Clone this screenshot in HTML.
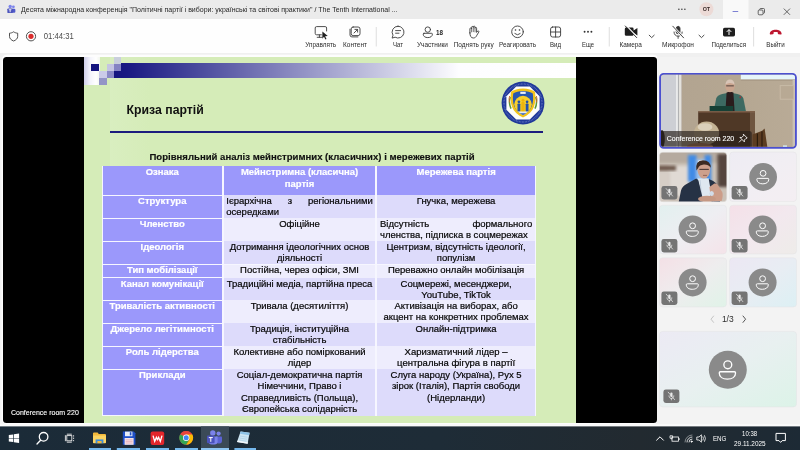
<!DOCTYPE html>
<html lang="uk">
<head>
<meta charset="utf-8">
<title>Teams meeting</title>
<style>
*{box-sizing:border-box;margin:0;padding:0}
html,body{width:800px;height:450px;overflow:hidden;background:#f3f3f3;font-family:"Liberation Sans",sans-serif;}
.abs{position:absolute}
#titlebar{position:absolute;left:0;top:0;width:800px;height:18px;background:#ebebeb;}
#titlebar .t{position:absolute;left:21px;top:4px;font-size:8.6px;color:#262626;white-space:nowrap;letter-spacing:-0.05px}
#toolbar{position:absolute;left:0;top:18px;width:800px;height:36px;background:#fff;}
.tb{position:absolute;top:30px;font-size:7px;color:#333;text-align:center;white-space:nowrap;transform:translateX(-50%);letter-spacing:-0.1px}
#stage{position:absolute;left:3px;top:56.8px;width:653.6px;height:366.3px;background:#000;border-radius:3.5px;overflow:hidden;box-shadow:0 0 0 1.2px #fdfdfd,0 -1.1px 0 1.2px #fdfdfd}

#slide{position:absolute;left:81px;top:0;width:492px;height:367px;background:#d5ecb8;overflow:hidden}
#slide .lt{position:absolute;left:26px;top:0;width:466px;height:367px;background:linear-gradient(90deg,#d9eec0,#d5ecb8 40px)}
.sq{position:absolute;width:7.4px;height:7.2px}
#bar{position:absolute;left:30px;top:6.3px;width:462px;height:14.7px;background:linear-gradient(90deg,#15157f 0,#1a1a83 14px,#fdfdff 345px,#ffffff 462px)}
#stitle{filter:blur(.35px);position:absolute;left:42.6px;top:46.3px;font-size:12.25px;font-weight:bold;color:#111;white-space:nowrap}
#rule{position:absolute;left:26px;top:74.700px;width:433.400px;height:2px;background:#1c1c7e}
#cap{-webkit-text-stroke:.15px #111;filter:blur(.35px);position:absolute;left:65.5px;top:94.6px;font-size:9.57px;font-weight:bold;color:#111;white-space:nowrap}
#tbl{position:absolute;left:17.8px;top:109px;filter:blur(.35px);width:434px;height:250px;background:#f6f6ff;font-size:9.5px;line-height:11.4px;color:#050505}
#tbl .r{position:absolute;left:0;width:434px}
#tbl .c{position:absolute;top:0.35px;bottom:0.35px;padding:0 2.6px 0 2.6px;-webkit-text-stroke:.2px currentColor;text-align:center;overflow:hidden;border-left:.4px solid #f6f6ff;border-right:.4px solid #f6f6ff}
#tbl .d .c{background:#dddbfb;top:.15px;bottom:.15px;border-left-width:.3px;border-right-width:.3px}
#tbl .l .c{background:#eeedfd;top:.15px;bottom:.15px;border-left-width:.3px;border-right-width:.3px}
#tbl .r .c.h{background:#9b98fb;color:#fff;font-weight:bold;top:.55px;bottom:.55px;padding-top:-.2px}
#tbl .r .c.h .x{margin-top:-.2px}
#tbl .c.j{text-align:justify}
#tbl .x{display:block;position:relative;top:-.45px}
#tbl .r.h .x{top:.15px}

.ic{position:absolute}
.lb{position:absolute;top:39.5px;font-size:7.2px;color:#2b2b2b;white-space:nowrap;transform:translateX(-50%) scaleX(.9);letter-spacing:-.05px}
.sep{position:absolute;top:27px;width:1px;height:20px;background:#dcdcdc}
#right{position:absolute;left:657px;top:57px;width:143px;height:370px;background:#f5f5f5}
.tile{position:absolute;border-radius:4px;overflow:hidden;border:.6px solid #e4e4e4}
.av{position:absolute;border-radius:50%;background:#757575}
.mb{position:absolute;width:16px;height:13px;border-radius:2.5px;background:#6f6f6f}
#taskbar{position:absolute;left:0;top:427px;width:800px;height:23px;background:#1e2733;}
table{border-collapse:separate;border-spacing:0}
</style>
</head>
<body>
<!--TOP-->
<svg id="top" width="800" height="57" viewBox="0 0 800 57" style="position:absolute;left:0;top:0;will-change:transform;opacity:.999;font-family:'Liberation Sans',sans-serif">
<rect x="0" y="0" width="800" height="19" fill="#ebebeb"/>
<rect x="0" y="19" width="800" height="34" fill="#ffffff"/>
<rect x="0" y="53" width="800" height="4" fill="#f0f0f0"/>
<rect x="723" y="0" width="25.500" height="19" fill="#f9f9f9"/>
<g transform="translate(1.3 1) scale(.89)"><circle cx="13.6" cy="6.6" r="1.6" fill="#7b83eb"/><rect x="11.8" y="8.6" width="4" height="4.6" rx="1.2" fill="#5059c9"/><circle cx="10" cy="6.2" r="1.9" fill="#7b83eb"/><rect x="6.8" y="8.4" width="6.2" height="5.2" rx="1" fill="#4b53bc"/><rect x="9.4" y="9.6" width="1" height="3" fill="#fff"/><rect x="8.4" y="9.4" width="3" height=".9" fill="#fff"/></g>
<text x="21" y="12.2" font-size="7.8" fill="#1f1f1f" font-weight="normal" text-anchor="start" textLength="376.5" lengthAdjust="spacingAndGlyphs">Десята міжнародна конференція "Політичні партії і вибори: українські та світові практики" / The Tenth International ...</text>
<circle cx="678.9" cy="9.2" r=".75" fill="#333"/>
<circle cx="681.9" cy="9.2" r=".75" fill="#333"/>
<circle cx="684.9" cy="9.2" r=".75" fill="#333"/>
<circle cx="706.400" cy="9.300" r="7" fill="#ecdad6"/>
<text x="706.4" y="11.2" font-size="5.6" fill="#3a2a28" font-weight="bold" text-anchor="middle" textLength="7.4" lengthAdjust="spacingAndGlyphs">ОТ</text>
<rect x="732.600" y="11.100" width="5.600" height=".9" fill="#6f73cf"/>
<g fill="none" stroke="#444" stroke-width=".8"><rect x="758.200" y="10" width="4.800" height="4.800" rx="1"/><path d="M759.700 9.900 v-.4 q0-1 1-1 h2.800 q1 0 1 1 v2.800 q0 1-1 1 h-.4"/></g>
<path d="M783.8 8.6 l6.2 6.2 M790 8.6 l-6.2 6.2" stroke="#444" stroke-width=".8" fill="none"/>
<path d="M13.600 31.800 c1.400 1 2.800 1.300 4.100 1.400 v3.200 c0 2.300-1.800 3.700-4.100 4.600 c-2.300-.9-4.100-2.300-4.100-4.600 v-3.200 c1.300-.1 2.700-.4 4.100-1.400z" fill="none" stroke="#3d3d3d" stroke-width=".9"/>
<circle cx="31" cy="36.3" r="4.6" fill="none" stroke="#3d3d3d" stroke-width=".9"/><circle cx="31" cy="36.3" r="2.6" fill="#d92c2c"/>
<text x="43.8" y="39.2" font-size="8.2" fill="#4a4a4a" font-weight="normal" text-anchor="start" textLength="30" lengthAdjust="spacingAndGlyphs">01:44:31</text>
<rect x="375.8" y="27" width=".8" height="19.5" fill="#d6d6d6"/>
<rect x="608.8000000000001" y="27" width=".8" height="19.5" fill="#d6d6d6"/>
<rect x="753.3000000000001" y="27" width=".8" height="19.5" fill="#d6d6d6"/>
<g fill="none" stroke="#3a3a3a" stroke-width=".9" stroke-linecap="round" stroke-linejoin="round"><path d="M321.400 34.800 h-4.800 q-1.400 0-1.400-1.400 v-5.400 q0-1.400 1.400-1.400 h8.600 q1.400 0 1.400 1.400 v3"/><path d="M319.400 35 v2.200 M317.200 37.300 h4.600"/></g><path d="M322.400 31.600 l5.400 4.300 -2.700 .3 1.400 2.700 -1.100 .55 -1.400 -2.700 -1.700 1.900z" fill="#222"/>
<text x="320.7" y="46.6" font-size="7.2" fill="#2b2b2b" font-weight="normal" text-anchor="middle" textLength="31" lengthAdjust="spacingAndGlyphs">Управлять</text>
<g fill="none" stroke="#3a3a3a" stroke-width=".9" stroke-linecap="round" stroke-linejoin="round"><rect x="351.200" y="27" width="8.800" height="8.600" rx="1.900"/><path d="M350 29.200 v5.800 q0 1.900 1.900 1.900 h6"/><path d="M354 33 l3.400-3.400 M354.900 29.400 h2.700 v2.700"/></g>
<text x="355" y="46.6" font-size="7.2" fill="#2b2b2b" font-weight="normal" text-anchor="middle" textLength="24" lengthAdjust="spacingAndGlyphs">Контент</text>
<g fill="none" stroke="#3a3a3a" stroke-width=".9" stroke-linecap="round" stroke-linejoin="round"><path d="M398 26.2 a5.9 5.9 0 1 1-2.9 11 l-3 .9 .9-2.9 a5.9 5.9 0 0 1 5-9z"/><path d="M395.6 30.6 h5 M395.6 33.2 h3.4"/></g>
<text x="398" y="46.6" font-size="7.2" fill="#2b2b2b" font-weight="normal" text-anchor="middle" textLength="10" lengthAdjust="spacingAndGlyphs">Чат</text>
<g fill="none" stroke="#3a3a3a" stroke-width=".9" stroke-linecap="round" stroke-linejoin="round"><circle cx="427.800" cy="29.600" r="2.700"/><path d="M424 33.300 h7.600 q.8 0 .8 .8 c0 2.300-2 3.500-4.600 3.500 s-4.600-1.200-4.600-3.500 q0-.8 .8-.8z"/></g>
<text x="439.5" y="34.7" font-size="7.6" fill="#222" font-weight="bold" text-anchor="middle" textLength="7" lengthAdjust="spacingAndGlyphs">18</text>
<text x="432.5" y="46.6" font-size="7.2" fill="#2b2b2b" font-weight="normal" text-anchor="middle" textLength="31" lengthAdjust="spacingAndGlyphs">Участники</text>
<g fill="none" stroke="#3a3a3a" stroke-width=".9" stroke-linecap="round" stroke-linejoin="round" transform="translate(469.300 25.700)"><path d="M.6 7.200 V3.100 a.85 .85 0 0 1 1.700 0 V1.600 a.85 .85 0 0 1 1.700 0 V1.300 a.85 .85 0 0 1 1.700 0 V2.500 a.8 .8 0 0 1 1.600 0 V6.700 L8.400 5.300 a.8 .8 0 0 1 1.100 1.100 L7.600 9.500 C6.800 11.400 5.600 12.300 4 12.300 C1.800 12.300 .6 10.400 .6 7.200 z"/><path d="M2.300 3.100 V6.200 M4 1.600 V6 M5.700 2.500 V6.200" stroke-width=".7"/></g>
<text x="473.7" y="46.6" font-size="7.2" fill="#2b2b2b" font-weight="normal" text-anchor="middle" textLength="40" lengthAdjust="spacingAndGlyphs">Поднять руку</text>
<g fill="none" stroke="#3a3a3a" stroke-width=".9" stroke-linecap="round" stroke-linejoin="round"><circle cx="517.5" cy="31.8" r="5.8"/><path d="M514.8 33.6 q2.7 2.6 5.4 0"/></g><circle cx="515.5" cy="30" r=".8" fill="#333"/><circle cx="519.5" cy="30" r=".8" fill="#333"/>
<text x="517.5" y="46.6" font-size="7.2" fill="#2b2b2b" font-weight="normal" text-anchor="middle" textLength="37" lengthAdjust="spacingAndGlyphs">Реагировать</text>
<g fill="none" stroke="#3a3a3a" stroke-width=".9" stroke-linecap="round" stroke-linejoin="round"><rect x="550.6" y="27" width="10" height="10" rx="2"/><path d="M555.6 27 v10 M550.6 32 h10"/></g>
<text x="555.5" y="46.6" font-size="7.2" fill="#2b2b2b" font-weight="normal" text-anchor="middle" textLength="11" lengthAdjust="spacingAndGlyphs">Вид</text>
<circle cx="584.6" cy="31.8" r=".95" fill="#333"/>
<circle cx="588" cy="31.8" r=".95" fill="#333"/>
<circle cx="591.4" cy="31.8" r=".95" fill="#333"/>
<text x="588" y="46.6" font-size="7.2" fill="#2b2b2b" font-weight="normal" text-anchor="middle" textLength="12" lengthAdjust="spacingAndGlyphs">Еще</text>
<path d="M626.200 27.600 h6 q1.400 0 1.400 1.400 v1.400 l3.800-2.400 v7.400 l-3.800-2.400 v1.400 q0 1.400-1.400 1.400 h-6 q-1.400 0-1.400-1.400 v-5.400 q0-1.400 1.400-1.400z" fill="#1e1e1e"/><path d="M626.300 25.600 l10.800 11.400" stroke="#fff" stroke-width="1.300"/><path d="M625.300 26 l11.400 11.600" stroke="#1e1e1e" stroke-width=".9" stroke-linecap="round"/>
<text x="630.7" y="46.6" font-size="7.2" fill="#2b2b2b" font-weight="normal" text-anchor="middle" textLength="22.5" lengthAdjust="spacingAndGlyphs">Камера</text>
<path d="M649.2 35.2 l2.5 2.4 2.5-2.4" fill="none" stroke="#3a3a3a" stroke-width=".9" stroke-linecap="round" stroke-linejoin="round"/>
<g fill="none" stroke="#3a3a3a" stroke-width=".9" stroke-linecap="round" stroke-linejoin="round"><rect x="676.2" y="26.4" width="3.8" height="7.4" rx="1.9" fill="#333"/><path d="M674 32 c0 2.6 1.8 4.2 4.1 4.2 s4.1-1.6 4.1-4.2 M678.1 36.2 v2.2"/></g><path d="M672.8 26.2 l10.8 11.6" stroke="#fff" stroke-width="2.2"/><path d="M672.8 26.2 l10.8 11.6" stroke="#333" stroke-width=".9" stroke-linecap="round"/>
<text x="678" y="46.6" font-size="7.2" fill="#2b2b2b" font-weight="normal" text-anchor="middle" textLength="32" lengthAdjust="spacingAndGlyphs">Микрофон</text>
<path d="M699 35.2 l2.5 2.4 2.5-2.4" fill="none" stroke="#3a3a3a" stroke-width=".9" stroke-linecap="round" stroke-linejoin="round"/>
<rect x="723" y="27.8" width="12" height="8.6" rx="1.6" fill="#1e1e1e"/><path d="M729 34.6 v-4.6 M727 31.6 l2-2 2 2" stroke="#fff" stroke-width="1" fill="none" stroke-linecap="round" stroke-linejoin="round"/>
<text x="728.8" y="46.6" font-size="7.2" fill="#2b2b2b" font-weight="normal" text-anchor="middle" textLength="34.5" lengthAdjust="spacingAndGlyphs">Поделиться</text>
<path d="M769.800 33.600 c.2-2.400 2.800-3.900 5.900-3.900 s5.700 1.500 5.900 3.900 c.1 .8-.4 1.100-1 1 l-2-.4 c-.6-.1-.8-.5-.8-1 v-.9 c-.7-.3-1.400-.4-2.100-.4 s-1.400 .1-2.100 .4 v.9 c0 .5-.2 .9-.8 1 l-2 .4 c-.6 .1-1.100-.2-1-1z" fill="#bd1730"/>
<text x="775.5" y="46.6" font-size="7.2" fill="#2b2b2b" font-weight="normal" text-anchor="middle" textLength="18.4" lengthAdjust="spacingAndGlyphs">Выйти</text>
</svg>
<!--/TOP-->
<div id="stage">
  <div id="slide">
    <div class="lt"></div>
    <div class="abs" style="left:0;top:0;width:16px;height:28px;background:linear-gradient(90deg,#cfcfe9,#f4f4fb 40%,#ffffff 75%,#f2f6ee)"></div>
    <div id="bar"></div>
    <div class="sq" style="left:7.4px;top:7px;background:#14147f"></div>
    <div class="sq" style="left:30px;top:0;background:#c9cfdc"></div>
    <div class="sq" style="left:22.6px;top:7px;background:#c4c4e2"></div>
    <div class="sq" style="left:30px;top:7px;background:#8583c3"></div>
    <div class="sq" style="left:15.2px;top:14.2px;background:#cbcbe8"></div>
    <div class="sq" style="left:22.6px;top:14.2px;background:#8a89c6"></div>
    <div class="sq" style="left:15.2px;top:21.4px;background:#9394c6"></div>
    <div id="stitle">Криза партій</div>
    <div id="rule"></div>
    <div id="cap">Порівняльний аналіз мейнстримних (класичних) і мережевих партій</div>
    <div id="tbl">
      <div class="r h" style="top:0.0px;height:29.5px">
<div class="c h" style="left:0px;width:120.9px"><span class="x">Ознака</span></div>
<div class="c h" style="left:120.9px;width:153.7px"><span class="x">Мейнстримна (класична)<br>партія</span></div>
<div class="c h" style="left:274.6px;width:159.4px"><span class="x">Мережева партія</span></div>
</div>
      <div class="r d" style="top:29.5px;height:23px">
<div class="c h" style="left:0px;width:120.9px"><span class="x">Структура</span></div>
<div class="c j" style="left:120.9px;width:153.7px"><span class="x">Ієрархічна з регіональними осередками</span></div>
<div class="c" style="left:274.6px;width:159.4px"><span class="x">Гнучка, мережева</span></div>
</div>
      <div class="r l" style="top:52.5px;height:23px">
<div class="c h" style="left:0px;width:120.9px"><span class="x">Членство</span></div>
<div class="c" style="left:120.9px;width:153.7px"><span class="x">Офіційне</span></div>
<div class="c j" style="left:274.6px;width:159.4px"><span class="x">Відсутність формального членства, підписка в соцмережах</span></div>
</div>
      <div class="r d" style="top:75.5px;height:23.2px">
<div class="c h" style="left:0px;width:120.9px"><span class="x">Ідеологія</span></div>
<div class="c" style="left:120.9px;width:153.7px"><span class="x">Дотримання ідеологічних основ діяльності</span></div>
<div class="c" style="left:274.6px;width:159.4px"><span class="x">Центризм, відсутність ідеології, популізм</span></div>
</div>
      <div class="r l" style="top:98.7px;height:13.3px">
<div class="c h" style="left:0px;width:120.9px"><span class="x">Тип мобілізації</span></div>
<div class="c" style="left:120.9px;width:153.7px"><span class="x">Постійна, через офіси, ЗМІ</span></div>
<div class="c" style="left:274.6px;width:159.4px"><span class="x">Переважно онлайн мобілізація</span></div>
</div>
      <div class="r d" style="top:112.0px;height:22.5px">
<div class="c h" style="left:0px;width:120.9px"><span class="x">Канал комунікації</span></div>
<div class="c" style="left:120.9px;width:153.7px"><span class="x">Традиційні медіа, партійна преса</span></div>
<div class="c" style="left:274.6px;width:159.4px"><span class="x">Соцмережі, месенджери,<br>YouTube, TikTok</span></div>
</div>
      <div class="r l" style="top:134.5px;height:23px">
<div class="c h" style="left:0px;width:120.9px"><span class="x">Тривалість активності</span></div>
<div class="c" style="left:120.9px;width:153.7px"><span class="x">Тривала (десятиліття)</span></div>
<div class="c" style="left:274.6px;width:159.4px"><span class="x">Активізація на виборах, або акцент на конкретних проблемах</span></div>
</div>
      <div class="r d" style="top:157.5px;height:23px">
<div class="c h" style="left:0px;width:120.9px"><span class="x">Джерело легітимності</span></div>
<div class="c" style="left:120.9px;width:153.7px"><span class="x">Традиція, інституційна стабільність</span></div>
<div class="c" style="left:274.6px;width:159.4px"><span class="x">Онлайн-підтримка</span></div>
</div>
      <div class="r l" style="top:180.5px;height:23px">
<div class="c h" style="left:0px;width:120.9px"><span class="x">Роль лідерства</span></div>
<div class="c" style="left:120.9px;width:153.7px"><span class="x">Колективне або поміркований лідер</span></div>
<div class="c" style="left:274.6px;width:159.4px"><span class="x">Харизматичний лідер –<br>центральна фігура в партії</span></div>
</div>
      <div class="r d" style="top:203.5px;height:46.5px">
<div class="c h" style="left:0px;width:120.9px"><span class="x">Приклади</span></div>
<div class="c" style="left:120.9px;width:153.7px"><span class="x">Соціал-демократична партія Німеччини, Право і Справедливість (Польща), Європейська солідарність</span></div>
<div class="c" style="left:274.6px;width:159.4px"><span class="x">Слуга народу (Україна), Рух 5 зірок (Італія), Партія свободи (Нідерланди)</span></div>
</div>
    </div>
    <svg id="logo" width="46" height="46" viewBox="-23 -23 46 46" style="position:absolute;left:415.700px;top:23.100px;filter:blur(.4px)">
      <defs><clipPath id="shc"><path d="M0-12 c4 0 7.600 1 9.800 2.400 c.6 4.600 .4 9-1.100 13 c-1.400 3.700-4.400 6.400-8.700 8.500 c-4.300-2.100-7.300-4.800-8.700-8.500 c-1.500-4-1.700-8.400-1.100-13 c2.200-1.400 5.800-2.400 9.800-2.400z"/></clipPath></defs>
      <circle r="21.400" fill="#20389a"/>
      <circle r="19" fill="none" stroke="#9fb0e2" stroke-width="1.500" stroke-dasharray=".7 .8" opacity=".5"/>
      <path d="M-6.800-16.600 h13.600 l9.800 9.800 v13.600 l-9.800 9.800 h-13.600 l-9.800-9.800 v-13.600z" fill="#fdfdfb"/>
      <path d="M-12.400-6 q-2.600 5 .4 11.600 M12.400-6 q2.600 5-.4 11.600" stroke="#5c9a3a" stroke-width="1.500" fill="none"/>
      <path d="M-13.400-7 q-1.200 3 0 6.400 M13.400-7 q1.200 3 0 6.400" stroke="#d0642c" stroke-width=".9" fill="none"/>
      <path d="M0-14.400 c5 0 9.400 1.300 12 3.200 c.8 5.400 .6 10.600-1.200 15.400 c-1.600 4.300-5.400 7.800-10.800 10.200 c-5.400-2.400-9.200-5.900-10.800-10.200 c-1.800-4.800-2-10-1.200-15.400 c2.600-1.900 7-3.200 12-3.200z" fill="#f2c31c"/>
      <g clip-path="url(#shc)">
        <rect x="-12" y="-13" width="24" height="27" fill="#2857b0"/>
        <circle cx="0" cy="1.600" r="8.800" fill="#f7cf2c"/>
        <rect x="-2.700" y="-11.300" width="5.400" height="2.200" fill="#eef2fa"/>
        <g fill="#2450a8"><circle cx="-4.100" cy="-1.200" r="1.350"/><rect x="-5.500" y=".4" width="2.800" height="8.400" rx=".9"/><circle cx="4.100" cy="-1.200" r="1.350"/><rect x="2.700" y=".4" width="2.800" height="8.400" rx=".9"/></g>
        <g fill="#eeb40c"><circle cx="0" cy="-2.700" r="1.500"/><rect x="-1.700" y="-1" width="3.400" height="10" rx=".9"/></g>
        <path d="M-8 8.600 h16 v6 h-16z" fill="#e3ebf7"/>
        <rect x="-4" y="10.300" width="8" height="3.200" fill="#2a56ae"/>
      </g>
    </svg>
  </div>
  <svg width="90" height="14" viewBox="0 0 90 14" style="position:absolute;left:4px;top:348px;will-change:transform;opacity:.999;font-family:'Liberation Sans',sans-serif"><text x="4" y="10.3" font-size="7.6" fill="#fff" stroke="#fff" stroke-width=".12" textLength="67.800" lengthAdjust="spacingAndGlyphs">Conference room 220</text></svg>
</div>
<!--RIGHT-->
<svg id="right" width="143" height="370" viewBox="657 57 143 370" style="position:absolute;left:657px;top:57px;will-change:transform;opacity:.999;font-family:'Liberation Sans',sans-serif">
<defs>
<linearGradient id="g2r" x1="0" y1="0" x2="1" y2="1"><stop offset="0" stop-color="#eeecf3"/><stop offset=".5" stop-color="#f1eef3"/><stop offset="1" stop-color="#f5eef2"/></linearGradient>
<linearGradient id="g3l" x1="0" y1="0" x2="1" y2="1"><stop offset="0" stop-color="#e2f0ef"/><stop offset=".5" stop-color="#eeeef2"/><stop offset="1" stop-color="#f5e3e9"/></linearGradient>
<linearGradient id="g3r" x1="0" y1="0" x2="1" y2="1"><stop offset="0" stop-color="#f6e0e8"/><stop offset=".5" stop-color="#f2e8ee"/><stop offset="1" stop-color="#eeece9"/></linearGradient>
<linearGradient id="g4l" x1="0" y1="0" x2="1" y2="1"><stop offset="0" stop-color="#f5e0e6"/><stop offset=".5" stop-color="#eeedee"/><stop offset="1" stop-color="#e0f3e8"/></linearGradient>
<linearGradient id="g4r" x1="0" y1="0" x2="1" y2="1"><stop offset="0" stop-color="#ece7f4"/><stop offset=".5" stop-color="#e8edf4"/><stop offset="1" stop-color="#dcf0f5"/></linearGradient>
<linearGradient id="g5" x1="0" y1="0" x2="1" y2="1"><stop offset="0" stop-color="#eceaf5"/><stop offset=".5" stop-color="#e8f0f0"/><stop offset="1" stop-color="#dcf3e8"/></linearGradient>
<clipPath id="cbig"><rect x="661" y="74.800" width="134" height="72" rx="2.700"/></clipPath>
<clipPath id="cp2"><rect x="659.400" y="152.200" width="67.400" height="49.600" rx="3.400"/></clipPath>
<linearGradient id="wall" x1="0" y1="0" x2="1" y2="0"><stop offset="0" stop-color="#b1a390"/><stop offset=".6" stop-color="#b5a792"/><stop offset="1" stop-color="#b9ab97"/></linearGradient>
<filter id="bl" x="-20%" y="-20%" width="140%" height="140%"><feGaussianBlur stdDeviation=".7"/></filter>
<filter id="bl2" x="-20%" y="-20%" width="140%" height="140%"><feGaussianBlur stdDeviation="1.6"/></filter>
</defs>
<rect x="657" y="57" width="143" height="370" fill="#f4f4f4"/>
<rect x="660.1" y="73.9" width="135.8" height="73.9" rx="3.6" fill="#b4a590" stroke="#4b50cf" stroke-width="1.9"/>
<g clip-path="url(#cbig)"><g filter="url(#bl)">
<rect x="655" y="70" width="145" height="82" fill="url(#wall)"/>
<rect x="655" y="70" width="26.4" height="82" fill="#cdcfd4"/>
<rect x="676.2" y="70" width="1.7" height="82" fill="#f1f1f1"/><rect x="677.9" y="70" width="1" height="82" fill="#a9a9aa"/><rect x="678.9" y="70" width="2.3" height="82" fill="#e3e1dc"/>
<rect x="740.8" y="72" width="56" height="7.6" fill="#e6f6fa"/>
<rect x="740.8" y="79.6" width="56" height="1" fill="#a39480"/>
<rect x="792.6" y="80" width="3" height="70" fill="#c9c1b4"/>
<rect x="780.2" y="85.6" width="13.6" height="13.6" fill="#b8a994" stroke="#c9bca8" stroke-width=".9"/>
<path d="M713.6 111.6 l2.600-13 q1-3.200 6-4.600 l7.600-1.600 7.600 1.600 q5 1.400 6 4.600 l2.600 13z" fill="#3e6b62"/>
<path d="M726.600 92.400 q3.400-1.400 6.800 0 l1.200 19.200 h-9.200z" fill="#2a1c1f"/>
<ellipse cx="730" cy="86.200" rx="4.700" ry="6" fill="#c9a48e"/>
<path d="M725.400 84.400 q.6-5 4.600-5 t4.600 5 q-4.600-3-9.200 0z" fill="#d8c4b6"/>
<rect x="726.200" y="85.300" width="7.600" height="1.100" fill="#5d4a42"/>
<rect x="739.600" y="96.400" width="1.300" height="1.600" fill="#b02a35"/>
<rect x="709.600" y="106" width="23.600" height="5.800" fill="#143f36"/>
<rect x="698.200" y="111.400" width="56.800" height="40" fill="#4f3727"/>
<rect x="750" y="111.400" width="5" height="40" fill="#6e5440"/>
<rect x="698.200" y="111.200" width="56.800" height="1.300" fill="#80634d"/>
<path d="M752.600 134.600 l9.600-3.800 2.400-2.200 2.800 19 h-14.800z" fill="#5b3c22"/>
<path d="M757.400 133.400 v14 M762 131.400 v16" stroke="#2b1a10" stroke-width="1.100"/>
<ellipse cx="706.600" cy="133" rx="12.600" ry="11.400" fill="#c4b394"/>
<ellipse cx="705" cy="127" rx="7.400" ry="3.800" fill="#dbd0bb"/>
<ellipse cx="700" cy="146.400" rx="13" ry="3.400" fill="#b9805f"/>
<ellipse cx="662" cy="139" rx="2.800" ry="9" fill="#2b2622"/>
<rect x="783" y="145.400" width="4" height="2" fill="#d9f1f4"/>
</g>
<path d="M661 131 h88.200 q2.600 0 2.600 2.600 v13.200 h-90.800z" fill="#241d18" fill-opacity=".66"/>
</g>
<text stroke="#fff" stroke-width=".12" x="666.8" y="141.4" font-size="7.7" fill="#ffffff" font-weight="normal" text-anchor="start" textLength="67.4" lengthAdjust="spacingAndGlyphs">Conference room 220</text>
<g fill="none" stroke="#fff" stroke-width=".85" stroke-linejoin="round" stroke-linecap="round"><path d="M743.600 134.400 l3.600 3.600 -1.300 .5 -1.600 1.600 .1 1.800 -4.500-4.500 1.800 .1 1.600-1.600z"/><path d="M741.500 139.800 l-2.200 2.200"/></g>
<g clip-path="url(#cp2)"><g filter="url(#bl)">
<rect x="656" y="150" width="74" height="54" fill="#cbc1b7"/>
<rect x="656" y="150" width="74" height="13" fill="#b5aa9f" filter="url(#bl2)"/>
<rect x="668" y="166" width="22" height="30" fill="#e0dad4" filter="url(#bl2)"/>
<rect x="656" y="171" width="14" height="30" fill="#d6cec6" filter="url(#bl2)"/>
<rect x="658" y="165.600" width="18" height="5" fill="#6b5548" filter="url(#bl2)"/>
<rect x="717.500" y="154" width="12" height="33" fill="#54443d" filter="url(#bl2)"/>
<g filter="url(#bl2)"><rect x="688" y="155" width="8.600" height="27" fill="#3f8be6"/><rect x="696.600" y="159" width="8" height="23" fill="#9fc5ef"/><rect x="704.600" y="155" width="6.600" height="29" fill="#3f8be6"/></g>
<ellipse cx="701.400" cy="161.600" rx="3.600" ry="1.700" fill="#eef0f6"/>
<path d="M678.600 202.600 l2.400-12 q1.200-4.600 5.600-6.600 l9.600-5.600 3 3 5 4 3-7 q7 2 10 6 l3 18.200z" fill="#283144"/>
<path d="M697.600 178.600 l1.400 6 2.600 18 h8.400 l.4-14 -1.800-10.400z" fill="#dfe8f0"/>
<path d="M700 180 l2.200 22" stroke="#b9c7d6" stroke-width=".8"/>
<path d="M696.200 178.800 l2 1.200 5.400 22 h-3.600z" fill="#283144"/>
<path d="M697.200 168 q-.4-6.600 6-6.800 q6.800 0 7 7.400 q0 4.600-1.800 7.400 q-1.800 2.600-4.600 2.600 q-3.400 0-5.400-4.600 q-1.100-2.800-1.200-6z" fill="#cda08c"/>
<path d="M696.400 170.400 q-1.600-9.800 6.600-10.200 q7.600 0 7.800 7.600 q-2.600-3.400-7-3.200 q-4.400 .4-5.800 3.600z" fill="#3a2a24"/>
<path d="M699.400 169.400 h9.400" stroke="#4a3835" stroke-width="1.100"/>
<path d="M703 175.400 h4" stroke="#8d5c50" stroke-width=".9"/>
<path d="M709.400 187 l5-3.400 q2-.6 3.200 1 l4.600 7.400 q1.200 3.400-.6 9 l-8.600 .4 -2.600-6z" fill="#cc9d89"/>
<ellipse cx="707" cy="199" rx="9" ry="3.200" fill="#c59883"/>
<ellipse cx="711.600" cy="193.600" rx="2.300" ry="2.500" fill="#d2dce8"/>
</g></g>
<rect x="659.400" y="152.200" width="67.400" height="49.600" rx="3.400" fill="none" stroke="#e6e6e6" stroke-width=".5"/>
<rect x="661.4" y="186" width="16" height="13.4" rx="2.4" fill="#747474"/><g stroke="#e9e9e9" stroke-width=".75" fill="none" stroke-linecap="round"><rect x="668.3" y="188.8" width="2.2" height="4.6" rx="1.1" fill="#e9e9e9" stroke="none"/><path d="M667.0 192.20000000000002 c0 1.700 1 2.600 2.400 2.600 s2.400-.9 2.400-2.600 M669.4 194.8 v1.500"/><path d="M666.1999999999999 188.6 l6.400 7.400"/></g>
<rect x="729.6" y="152" width="67" height="49.6" rx="3.4" fill="url(#g2r)" stroke="#e4e4e6" stroke-width=".6"/>
<circle cx="763.1" cy="177" r="13.9" fill="#8a8a8a"/><g fill="none" stroke="#fff" stroke-width="0.99" stroke-linejoin="round"><circle cx="763.1" cy="173.33" r="2.88"/><path d="M758.24 178.39 h9.73 q0.79 0 0.79 0.89 c0 2.98 -2.58 4.57 -5.96 4.57 s-5.96 -1.59 -5.96 -4.57 q0 -0.89 0.79 -0.89z"/></g>
<rect x="731.6" y="186" width="16" height="13.4" rx="2.4" fill="#747474"/><g stroke="#e9e9e9" stroke-width=".75" fill="none" stroke-linecap="round"><rect x="738.5" y="188.8" width="2.2" height="4.6" rx="1.1" fill="#e9e9e9" stroke="none"/><path d="M737.2 192.20000000000002 c0 1.700 1 2.600 2.400 2.600 s2.400-.9 2.400-2.600 M739.6 194.8 v1.500"/><path d="M736.4 188.6 l6.400 7.400"/></g>
<rect x="659.4" y="205.2" width="67.2" height="48.8" rx="3.4" fill="url(#g3l)" stroke="#e4e4e6" stroke-width=".6"/>
<circle cx="692.6" cy="229.5" r="14" fill="#8a8a8a"/><g fill="none" stroke="#fff" stroke-width="1.00" stroke-linejoin="round"><circle cx="692.6" cy="225.80" r="2.90"/><path d="M687.70 230.90 h9.80 q0.80 0 0.80 0.90 c0 3.00 -2.60 4.60 -6.00 4.60 s-6.00 -1.60 -6.00 -4.60 q0 -0.90 0.80 -0.90z"/></g>
<rect x="661.4" y="239" width="16" height="13.4" rx="2.4" fill="#747474"/><g stroke="#e9e9e9" stroke-width=".75" fill="none" stroke-linecap="round"><rect x="668.3" y="241.8" width="2.2" height="4.6" rx="1.1" fill="#e9e9e9" stroke="none"/><path d="M667.0 245.20000000000002 c0 1.700 1 2.600 2.400 2.600 s2.400-.9 2.400-2.600 M669.4 247.8 v1.500"/><path d="M666.1999999999999 241.6 l6.400 7.400"/></g>
<rect x="729.6" y="205.2" width="67" height="48.8" rx="3.4" fill="url(#g3r)" stroke="#e4e4e6" stroke-width=".6"/>
<circle cx="762.6" cy="229.5" r="14" fill="#8a8a8a"/><g fill="none" stroke="#fff" stroke-width="1.00" stroke-linejoin="round"><circle cx="762.6" cy="225.80" r="2.90"/><path d="M757.70 230.90 h9.80 q0.80 0 0.80 0.90 c0 3.00 -2.60 4.60 -6.00 4.60 s-6.00 -1.60 -6.00 -4.60 q0 -0.90 0.80 -0.90z"/></g>
<rect x="731.6" y="239" width="16" height="13.4" rx="2.4" fill="#747474"/><g stroke="#e9e9e9" stroke-width=".75" fill="none" stroke-linecap="round"><rect x="738.5" y="241.8" width="2.2" height="4.6" rx="1.1" fill="#e9e9e9" stroke="none"/><path d="M737.2 245.20000000000002 c0 1.700 1 2.600 2.400 2.600 s2.400-.9 2.400-2.600 M739.6 247.8 v1.500"/><path d="M736.4 241.6 l6.400 7.400"/></g>
<rect x="659.4" y="257.8" width="67.2" height="49.2" rx="3.4" fill="url(#g4l)" stroke="#e4e4e6" stroke-width=".6"/>
<circle cx="692.6" cy="282.4" r="14" fill="#8a8a8a"/><g fill="none" stroke="#fff" stroke-width="1.00" stroke-linejoin="round"><circle cx="692.6" cy="278.70" r="2.90"/><path d="M687.70 283.80 h9.80 q0.80 0 0.80 0.90 c0 3.00 -2.60 4.60 -6.00 4.60 s-6.00 -1.60 -6.00 -4.60 q0 -0.90 0.80 -0.90z"/></g>
<rect x="661.4" y="291.6" width="16" height="13.4" rx="2.4" fill="#747474"/><g stroke="#e9e9e9" stroke-width=".75" fill="none" stroke-linecap="round"><rect x="668.3" y="294.4" width="2.2" height="4.6" rx="1.1" fill="#e9e9e9" stroke="none"/><path d="M667.0 297.8 c0 1.700 1 2.600 2.400 2.600 s2.400-.9 2.400-2.600 M669.4 300.4 v1.500"/><path d="M666.1999999999999 294.2 l6.400 7.400"/></g>
<rect x="729.6" y="257.8" width="67" height="49.2" rx="3.4" fill="url(#g4r)" stroke="#e4e4e6" stroke-width=".6"/>
<circle cx="762.6" cy="282.4" r="14" fill="#8a8a8a"/><g fill="none" stroke="#fff" stroke-width="1.00" stroke-linejoin="round"><circle cx="762.6" cy="278.70" r="2.90"/><path d="M757.70 283.80 h9.80 q0.80 0 0.80 0.90 c0 3.00 -2.60 4.60 -6.00 4.60 s-6.00 -1.60 -6.00 -4.60 q0 -0.90 0.80 -0.90z"/></g>
<rect x="731.6" y="291.6" width="16" height="13.4" rx="2.4" fill="#747474"/><g stroke="#e9e9e9" stroke-width=".75" fill="none" stroke-linecap="round"><rect x="738.5" y="294.4" width="2.2" height="4.6" rx="1.1" fill="#e9e9e9" stroke="none"/><path d="M737.2 297.8 c0 1.700 1 2.600 2.400 2.600 s2.400-.9 2.400-2.600 M739.6 300.4 v1.500"/><path d="M736.4 294.2 l6.400 7.400"/></g>
<path d="M713.6 316 l-2.600 3.200 2.600 3.200" fill="none" stroke="#bdbdbd" stroke-width=".9" stroke-linecap="round" stroke-linejoin="round"/>
<path d="M743 316 l2.600 3.200 -2.600 3.200" fill="none" stroke="#424242" stroke-width=".9" stroke-linecap="round" stroke-linejoin="round"/>
<text x="727.8" y="322.2" font-size="8.6" fill="#2e2e2e" font-weight="normal" text-anchor="middle" textLength="11.8" lengthAdjust="spacingAndGlyphs">1/3</text>
<rect x="659.4" y="331.4" width="137.2" height="75.6" rx="3.4" fill="url(#g5)" stroke="#e4e4e6" stroke-width=".6"/>
<circle cx="727.8" cy="369.8" r="19" fill="#8a8a8a"/><g fill="none" stroke="#fff" stroke-width="1.36" stroke-linejoin="round"><circle cx="727.8" cy="364.78" r="3.94"/><path d="M721.15 371.70 h13.30 q1.09 0 1.09 1.22 c0 4.07 -3.53 6.24 -8.14 6.24 s-8.14 -2.17 -8.14 -6.24 q0 -1.22 1.09 -1.22z"/></g>
<rect x="663.4" y="389.6" width="16" height="13.4" rx="2.4" fill="#747474"/><g stroke="#e9e9e9" stroke-width=".75" fill="none" stroke-linecap="round"><rect x="670.3" y="392.4" width="2.2" height="4.6" rx="1.1" fill="#e9e9e9" stroke="none"/><path d="M669.0 395.8 c0 1.700 1 2.600 2.400 2.600 s2.400-.9 2.400-2.600 M671.4 398.4 v1.500"/><path d="M668.1999999999999 392.2 l6.400 7.400"/></g>
</svg>
<!--/RIGHT-->
<!--TASK-->
<svg id="task" width="800" height="26" viewBox="0 424 800 26" style="position:absolute;left:0;top:424px;will-change:transform;opacity:.999;font-family:'Liberation Sans',sans-serif">
<defs><linearGradient id="tbg" x1="0" y1="0" x2="1" y2="0"><stop offset="0" stop-color="#1b2b38"/><stop offset=".55" stop-color="#1e2c37"/><stop offset=".8" stop-color="#222a30"/><stop offset="1" stop-color="#1d2a35"/></linearGradient></defs>
<rect x="0" y="424.300" width="800" height="2.200" fill="#fbfbfb"/>
<rect x="0" y="426.400" width="800" height="23.600" fill="url(#tbg)"/>
<rect x="201" y="426.400" width="28" height="23.600" fill="#3b4a57"/>
<g fill="#fff"><path d="M8.800 435 l4.400-.6 v3.500 h-4.400z M13.900 434.300 l5.200-.7 v4.300 h-5.200z M8.800 438.600 h4.400 v3.500 l-4.400-.6z M13.900 438.600 h5.200 v4.300 l-5.200-.7z"/></g>
<g fill="none" stroke="#fff" stroke-width="1.3" stroke-linecap="round"><circle cx="43.6" cy="436.8" r="4.300"/><path d="M40.600 440.200 l-3.600 3.800"/></g>
<g fill="none" stroke="#e8e8e8" stroke-width=".9"><rect x="66.800" y="435.600" width="5" height="5.200"/><path d="M65.400 435.200 v6 M73.600 435.200 v1.400 M73.600 437.600 v1.400 M73.600 440 v1.200 M66.800 434.200 h5 M66.800 442.200 h5"/></g>
<g><path d="M93 433.600 q0-1 1-1 h3.600 l1.200 1.300 h6.200 q1 0 1 1 v7.600 h-13z" fill="#f5b93a"/><path d="M93 435.600 h13 v6.800 q0 .8-.8 .8 h-11.400 q-.8 0-.8-.8z" fill="#fcd462"/><path d="M95.600 439.400 h7.800 v3.800 h-7.800z" fill="#3f8fdb"/><path d="M97.400 441 h4.200 v2.200 h-4.200z" fill="#f5b93a"/></g>
<g><path d="M122.800 431.600 h11 l1.600 1.600 v11.600 h-12.600z" fill="#1f4fc8"/><rect x="125" y="431.600" width="7.400" height="4.600" fill="#e9eef8"/><rect x="129.800" y="432.200" width="1.600" height="3.200" fill="#1f4fc8"/><rect x="124.600" y="438" width="9" height="6.800" fill="#f6e3e6"/><path d="M125.600 439.800 h7 M125.600 441.400 h7 M125.600 443 h7" stroke="#d98a96" stroke-width=".5"/></g>
<g><rect x="150.600" y="431.600" width="13.600" height="13.400" rx="2" fill="#e3262b"/><path d="M153 435.600 l1.700 5.800 1.700-4 1.100 2.200 1.100-2.200 1.700 4 1.700-5.800" fill="none" stroke="#fff" stroke-width="1.300" stroke-linejoin="miter"/></g>
<g><circle cx="186.200" cy="437.800" r="6.900" fill="#e8453c"/><path d="M186.200 437.800 L180.220 441.250 A6.900 6.900 0 0 0 186.200 444.700 L189.650 438.700z" fill="#34a853"/><path d="M186.200 437.800 L180.220 441.250 A6.900 6.900 0 0 1 180.220 434.350z" fill="#34a853"/><path d="M186.200 444.700 A6.900 6.900 0 0 0 192.180 434.350 L186.200 434.350 L189.650 439.800z" fill="#fbbc05"/><path d="M180.220 434.350 A6.900 6.900 0 0 1 192.180 434.350 L186.200 434.350z" fill="#e8453c"/><circle cx="186.200" cy="437.800" r="3.200" fill="#fff"/><circle cx="186.200" cy="437.800" r="2.500" fill="#4285f4"/></g>
<g><circle cx="218.600" cy="433.600" r="2.100" fill="#7b83eb"/><path d="M216 436.400 h5.200 q.8 0 .8 .8 v3.600 q0 2.600-2.600 2.600 h-1.400 q-2 0-2-2z" fill="#5b63d3"/><circle cx="212.800" cy="433" r="2.700" fill="#7b83eb"/><path d="M208.600 436.400 h9 v5 q0 3-3.200 3 h-2.600 q-3.200 0-3.200-3z" fill="#7b83eb"/><rect x="207" y="435.600" width="7.600" height="7.600" rx="1" fill="#4b53bc"/><path d="M208.800 437.600 h4 M210.800 437.600 v4.200" stroke="#fff" stroke-width="1"/></g>
<g><path d="M240.600 431.400 l9 1.400 -2 11 -10.600-1.800z" fill="#cfe6f3"/><path d="M240.600 431.400 l9 1.400 -.5 2.400 -9.200-1.400z" fill="#8ec3e6"/><path d="M237 442 l10.600 1.800 .6-1.400 -10.400-1.800z" fill="#f4f8fb"/><path d="M239.800 436 l7.600 1.200 M239.400 438 l7.600 1.200 M239 440 l7.400 1.200" stroke="#9fc6de" stroke-width=".5"/></g>
<rect x="89" y="448" width="22" height="2" fill="#76b9ed"/>
<rect x="116.8" y="448" width="23.200000000000003" height="2" fill="#76b9ed"/>
<rect x="146" y="448" width="23" height="2" fill="#76b9ed"/>
<rect x="175" y="448" width="23" height="2" fill="#76b9ed"/>
<rect x="201" y="448" width="28" height="2" fill="#8fc6f2"/>
<rect x="234.4" y="448" width="21.599999999999994" height="2" fill="#76b9ed"/>
<path d="M656.600 440.200 l3.400-3.400 3.400 3.400" fill="none" stroke="#fff" stroke-width="1" stroke-linecap="round" stroke-linejoin="round"/>
<g fill="none" stroke="#fff" stroke-width=".8"><rect x="672" y="437" width="6.600" height="4.200"/><path d="M679.200 438.200 v1.800"/><path d="M670 435.800 h2.600 v2.400 h-2.600z M671.300 438.200 v1.200"/></g>
<g fill="none" stroke="#fff" stroke-width=".8" stroke-linecap="round"><path d="M685 442 a7 7 0 0 1 7-7" stroke-opacity=".55"/><path d="M687 442 a5 5 0 0 1 5-5"/><path d="M689 442 a3 3 0 0 1 3-3"/><circle cx="691.600" cy="441.600" r=".6" fill="#fff"/></g>
<g fill="none" stroke="#fff" stroke-width=".8" stroke-linejoin="round" stroke-linecap="round"><path d="M697.200 437 h1.800 l2.400-2.200 v7.400 l-2.400-2.200 h-1.800z"/><path d="M703 436.800 q1 1.700 0 3.400 M704.600 435.600 q1.800 2.900 0 5.800"/></g>
<text x="719.7" y="441" font-size="7" fill="#fff" font-weight="normal" text-anchor="middle" textLength="13.4" lengthAdjust="spacingAndGlyphs">ENG</text>
<text x="749.6" y="435.6" font-size="7" fill="#fff" font-weight="normal" text-anchor="middle" textLength="15" lengthAdjust="spacingAndGlyphs">10:38</text>
<text x="749.8" y="446.2" font-size="7" fill="#fff" font-weight="normal" text-anchor="middle" textLength="31.6" lengthAdjust="spacingAndGlyphs">29.11.2025</text>
<path d="M776.400 433.400 h9 v7.200 h-3.200 l-1.600 1.800 -1.600-1.800 h-2.600z" fill="none" stroke="#fff" stroke-width="1" stroke-linecap="round" stroke-linejoin="round"/>
</svg>
<!--/TASK-->
</body>
</html>
